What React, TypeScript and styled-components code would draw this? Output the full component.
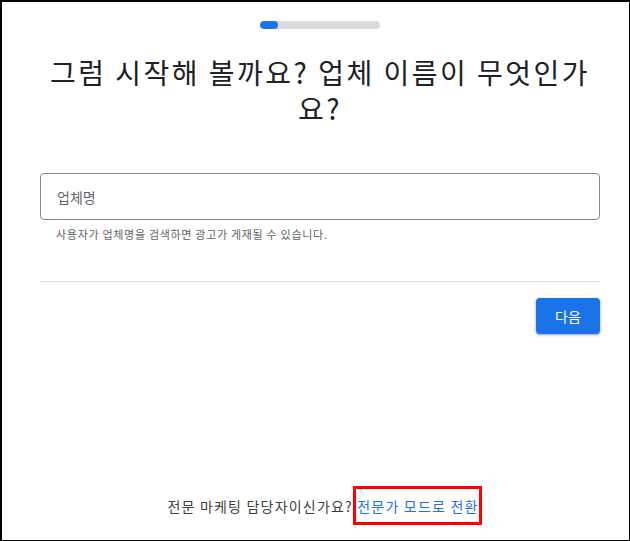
import React from "react";
import styled, { createGlobalStyle } from "styled-components";

const GlobalStyle = createGlobalStyle`
  html, body { margin: 0; padding: 0; background: #ffffff; }
  body { font-family: "Noto Sans CJK KR", "Noto Sans", Roboto, sans-serif; }
  * { box-sizing: border-box; }
`;

const Frame = styled.div`
  width: 630px;
  height: 541px;
  border: 2px solid #000000;
  border-right-width: 1px;
  border-bottom-width: 1px;
  display: flex;
  flex-direction: column;
  padding: 0 29px 0 38px;
  background: #ffffff;
`;

const Track = styled.div`
  align-self: center;
  margin-top: 19px;
  width: 120px;
  height: 8px;
  border-radius: 4px;
  background: #dadce0;
  overflow: hidden;
`;

const Fill = styled.div`
  height: 100%;
  border-radius: 4px;
  background: #1a73e8;
`;

const Title = styled.h1`
  margin: 25px 0 0;
  width: 560px;
  font-size: 28px;
  line-height: 36px;
  font-weight: 400;
  letter-spacing: 2.5px;
  color: #202124;
  text-align: center;
`;

const Field = styled.div`
  margin-top: 47px;
  width: 560px;
  height: 47px;
  border: 1px solid #80868b;
  border-radius: 4px;
  display: flex;
  align-items: center;
  padding: 0 16px;
`;

const Placeholder = styled.span`
  font-size: 14px;
  color: #5f6368;
`;

const Helper = styled.div`
  margin-top: 6px;
  padding-left: 16px;
  font-size: 11px;
  line-height: 16px;
  letter-spacing: 0.7px;
  color: #5f6368;
`;

const Divider = styled.hr`
  margin: 39px 0 0;
  width: 560px;
  border: 0;
  border-top: 1px solid #dadce0;
`;

const ButtonRow = styled.div`
  width: 560px;
  display: flex;
  justify-content: flex-end;
  margin-top: 16px;
`;

const PrimaryButton = styled.button`
  width: 64px;
  height: 36px;
  border: 0;
  border-radius: 4px;
  background: #1a73e8;
  color: #ffffff;
  font-family: inherit;
  font-size: 14px;
  box-shadow: 0 1px 2px rgba(60, 64, 67, 0.3), 0 1px 3px 1px rgba(60, 64, 67, 0.15);
  cursor: pointer;
`;

const Footer = styled.div`
  margin-top: auto;
  margin-bottom: 26px;
  width: 560px;
  text-align: center;
  padding-left: 6px;
  font-size: 14px;
  line-height: 16px;
  letter-spacing: 1.2px;
  color: #3c4043;
`;

const ModeLink = styled.a`
  position: relative;
  color: #1a73e8;
  text-decoration: none;
  &::after {
    content: "";
    position: absolute;
    left: -4px;
    right: -3px;
    top: -10px;
    bottom: -9px;
    border: 3px solid #ff0000;
    pointer-events: none;
  }
`;

export default function App() {
  const progress = 15;
  return (
    <>
      <GlobalStyle />
      <Frame>
        <Track>
          <Fill style={{ width: `${progress}%` }} />
        </Track>
        <Title>그럼 시작해 볼까요? 업체 이름이 무엇인가요?</Title>
        <Field>
          <Placeholder>업체명</Placeholder>
        </Field>
        <Helper>사용자가 업체명을 검색하면 광고가 게재될 수 있습니다.</Helper>
        <Divider />
        <ButtonRow>
          <PrimaryButton>다음</PrimaryButton>
        </ButtonRow>
        <Footer>
          전문 마케팅 담당자이신가요? <ModeLink href="#">전문가 모드로 전환</ModeLink>
        </Footer>
      </Frame>
    </>
  );
}
